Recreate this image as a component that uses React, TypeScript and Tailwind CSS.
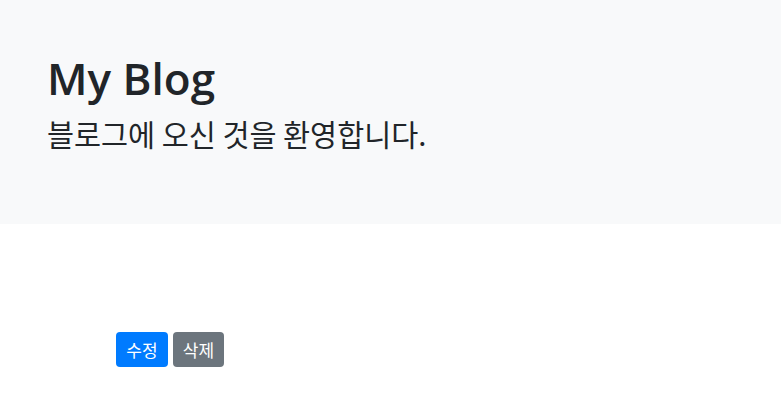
export default function App() {
  return (
    <div className="min-h-[420px] bg-white text-[#212529] font-['Open_Sans','Noto_Sans_CJK_KR',sans-serif]">
      <div className="h-[224px] bg-[#f8f9fa] pl-[47px] pt-[50px]">
        <h1 className="text-[44px] font-semibold leading-[56px]">My Blog</h1>
        <p className="mt-[7px] text-[29.4px] leading-[40px] font-['Noto_Sans_CJK_KR',sans-serif]">블로그에 오신 것을 환영합니다.</p>
      </div>
      <div className="flex gap-[5px] pl-[116px] pt-[108px] font-['Noto_Sans_CJK_KR',sans-serif]">
        <button className="h-[35px] w-[52px] rounded-[4px] bg-[#007bff] text-[17px] text-white">수정</button>
        <button className="h-[35px] w-[51px] rounded-[4px] bg-[#6c757d] text-[17px] text-white">삭제</button>
      </div>
    </div>
  );
}
